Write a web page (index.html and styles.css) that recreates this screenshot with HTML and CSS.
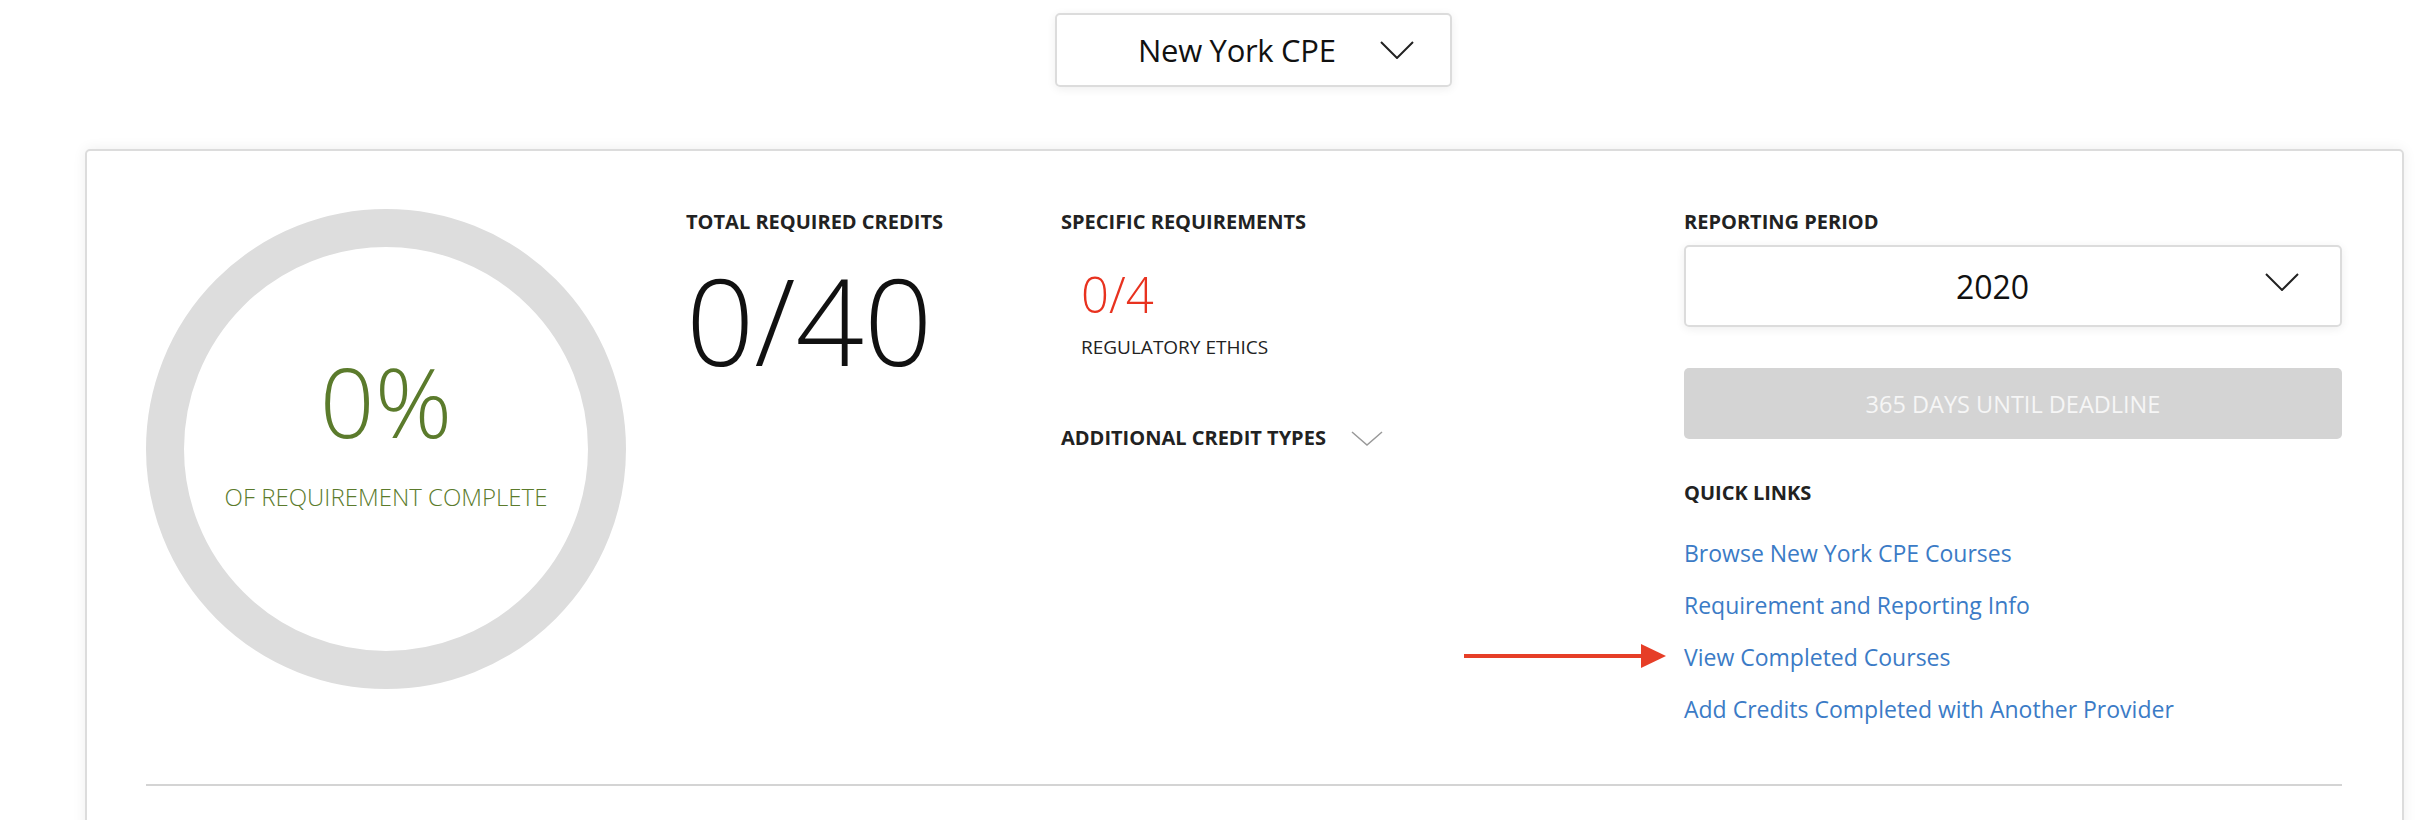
FILE: index.html
```html
<!DOCTYPE html>
<html>
  <head>
    <title>CPE Tracker</title>
    <link rel="stylesheet" href="styles.css">
  </head>
  <body>
    <div class="top-bar">
      <div class="state-select">
        <span class="state-name">New York CPE</span>
        <svg class="chevron" width="34" height="18" viewBox="0 0 34 18">
          <polyline points="1,1 17,17 33,1" fill="none" stroke="#222" stroke-width="2"/>
        </svg>
      </div>
    </div>

    <div class="card">
      <div class="summary">
        <div class="progress-col">
          <div class="ring">
            <div class="ring-value">0%</div>
            <div class="ring-label">OF REQUIREMENT COMPLETE</div>
          </div>
        </div>

        <div class="total-col">
          <h3 class="label">TOTAL REQUIRED CREDITS</h3>
          <div class="total-value">0/40</div>
        </div>

        <div class="specific-col">
          <h3 class="label">SPECIFIC REQUIREMENTS</h3>
          <div class="req">
            <div class="req-value">0/4</div>
            <div class="req-name">REGULATORY ETHICS</div>
          </div>
          <div class="additional">
            <h3 class="label">ADDITIONAL CREDIT TYPES</h3>
            <svg width="32" height="15" viewBox="0 0 32 15">
              <polyline points="1,1 16,14 31,1" fill="none" stroke="#999" stroke-width="1.5"/>
            </svg>
          </div>
        </div>

        <div class="period-col">
          <h3 class="label">REPORTING PERIOD</h3>
          <div class="period-select">
            <span class="period-year">2020</span>
            <svg class="period-chevron" width="34" height="18" viewBox="0 0 34 18">
              <polyline points="1,1 17,17 33,1" fill="none" stroke="#222" stroke-width="2"/>
            </svg>
          </div>
          <div class="deadline">365 DAYS UNTIL DEADLINE</div>

          <h3 class="label quick-title">QUICK LINKS</h3>
          <ul class="quick-links">
            <li><a href="#">Browse New York CPE Courses</a></li>
            <li><a href="#">Requirement and Reporting Info</a></li>
            <li class="marked">
              <svg class="arrow" width="202" height="24" viewBox="0 0 202 24">
                <rect x="0" y="10" width="180" height="4" fill="#e63e27"/>
                <polygon points="177,0 202,12 177,24" fill="#e63e27"/>
              </svg>
              <a href="#">View Completed Courses</a>
            </li>
            <li><a href="#">Add Credits Completed with Another Provider</a></li>
          </ul>
        </div>
      </div>
      <hr class="divider">
    </div>
  </body>
</html>
```

FILE: styles.css
```css
body {
  margin: 0;
  font-family: "Open Sans", "Liberation Sans", sans-serif;
  color: #222;
  background: #fff;
}
.top-bar {
  display: flex;
  padding-top: 13px;
  padding-left: 1055px;
}
.state-select {
  width: 397px;
  height: 74px;
  box-sizing: border-box;
  display: flex;
  align-items: center;
  gap: 44px;
  padding-left: 81px;
  border: 2px solid #dcdcdc;
  border-radius: 5px;
  box-shadow: 0 2px 10px rgba(0, 0, 0, 0.07);
}
.state-name {
  font-size: 31px;
  letter-spacing: -0.3px;
  color: #111;
}
.card {
  margin: 62px 30px 0 85px;
  padding: 58px 60px 120px 59px;
  border: 2px solid #dcdcdc;
  border-radius: 5px;
  box-shadow: 0 0 14px rgba(0, 0, 0, 0.07);
}
.summary {
  display: grid;
  grid-template-columns: 540px 375px 623px 1fr;
  align-items: start;
}
.ring {
  width: 480px;
  height: 480px;
  box-sizing: border-box;
  border: 38px solid #dddddd;
  border-radius: 50%;
  display: flex;
  flex-direction: column;
  align-items: center;
  justify-content: center;
  padding-bottom: 37px;
  color: #5b7b2c;
}
.ring-value {
  font-size: 96px;
  font-weight: 300;
  line-height: 1;
}
.ring-label {
  margin-top: 36px;
  font-size: 24px;
  font-weight: 300;
  line-height: 1;
}
.label {
  margin: 0;
  font-size: 20px;
  font-weight: 700;
  line-height: 26px;
  color: #222;
}
.total-value {
  margin-top: 25px;
  font-size: 120px;
  font-weight: 300;
  line-height: 1;
  color: #111;
}
.req {
  padding-left: 20px;
}
.req-value {
  margin-top: 35px;
  font-size: 49px;
  font-weight: 300;
  line-height: 1;
  color: #e8321f;
}
.req-name {
  margin-top: 19px;
  font-size: 19px;
  line-height: 1;
  color: #222;
}
.additional {
  display: flex;
  align-items: center;
  gap: 25px;
  margin-top: 68px;
}
.period-select {
  display: grid;
  align-items: center;
  margin-top: 10px;
  height: 82px;
  box-sizing: border-box;
  padding-right: 41px;
  border: 2px solid #dcdcdc;
  border-radius: 5px;
  box-shadow: 0 2px 10px rgba(0, 0, 0, 0.07);
}
.period-year,
.period-chevron {
  grid-area: 1 / 1;
}
.period-year {
  justify-self: center;
  font-size: 32px;
  color: #111;
}
.period-chevron {
  justify-self: end;
  margin-bottom: 9px;
}
.deadline {
  margin-top: 41px;
  height: 71px;
  display: flex;
  align-items: center;
  justify-content: center;
  background: #d4d4d4;
  border-radius: 5px;
  font-size: 23.5px;
  color: #f6f6f6;
}
.quick-title {
  margin-top: 41px;
}
.quick-links {
  list-style: none;
  margin: 21px 0 0;
  padding: 0;
}
.quick-links li {
  font-size: 23px;
  line-height: 52px;
}
.quick-links a {
  color: #3b7bc6;
  text-decoration: none;
}
.marked {
  position: relative;
}
.arrow {
  position: absolute;
  right: calc(100% + 18px);
  top: 13px;
}
.divider {
  margin: 49px 0 0;
  border: 0;
  height: 2px;
  background: #d4d4d4;
}
```
